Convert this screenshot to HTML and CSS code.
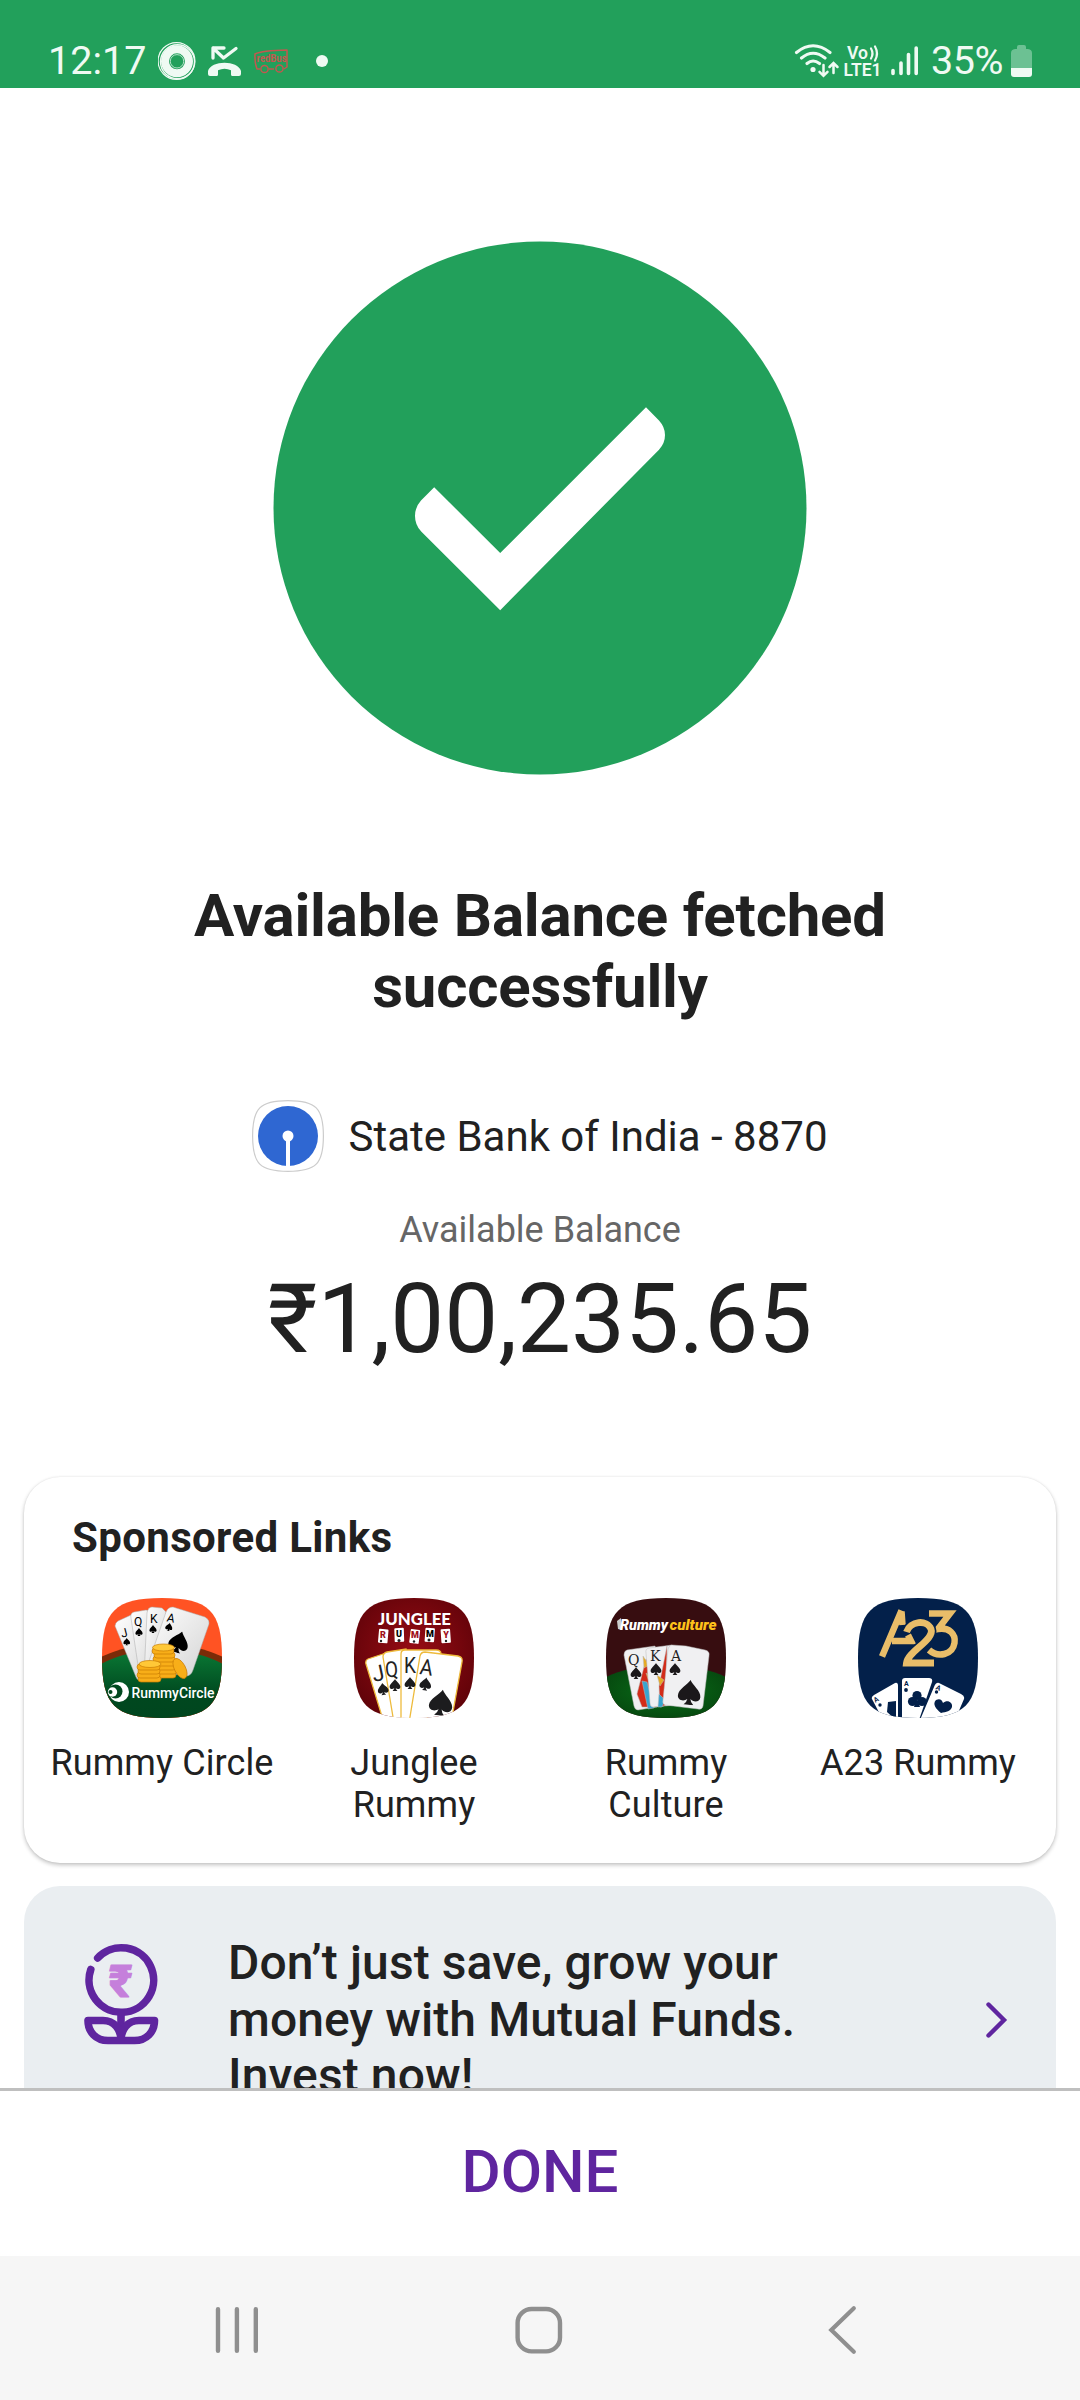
FILE: index.html
```html
<!DOCTYPE html>
<html lang="en">
<head>
<meta charset="utf-8">
<title>Available Balance</title>
<link rel="stylesheet" href="styles.css">
</head>
<body>
<svg class="defs" width="0" height="0" aria-hidden="true">
  <defs>
    <symbol id="spade" viewBox="0 0 20 20"><path d="M10 0C12 4 19 8 19 13C19 17 14 18 11.2 15.2Q11.5 18 14 20H6Q8.5 18 8.8 15.2C6 18 1 17 1 13C1 8 8 4 10 0Z"/></symbol>
    <clipPath id="squircle"><path d="M60 0C107 0 120 13 120 60C120 107 107 120 60 120C13 120 0 107 0 60C0 13 13 0 60 0Z"/></clipPath>
    <linearGradient id="felt" x1="0" y1="0" x2="0" y2="1"><stop offset="0" stop-color="#0a7a35"/><stop offset=".45" stop-color="#00481f"/><stop offset="1" stop-color="#00431e"/></linearGradient>
    <linearGradient id="paper" x1="0" y1="0" x2="1" y2="1"><stop offset="0" stop-color="#fff"/><stop offset="1" stop-color="#d4d4d4"/></linearGradient>
    <radialGradient id="ruby" cx=".5" cy=".45" r=".65"><stop offset="0" stop-color="#980c14"/><stop offset="1" stop-color="#5c0208"/></radialGradient>
    <radialGradient id="table" cx=".5" cy=".4" r=".6"><stop offset="0" stop-color="#087018"/><stop offset=".75" stop-color="#06480f"/><stop offset="1" stop-color="#021812"/></radialGradient>
  </defs>
</svg>

<header class="status">
  <span class="clock">12:17</span>
  <svg class="notif" width="174" height="40" viewBox="158 41 174 40">
    <g fill="none" stroke="#effaf3">
      <circle cx="177" cy="61.3" r="12" stroke-width="8"/>
      <circle cx="176.5" cy="61" r="18.4" stroke-width="1.2"/>
      <circle cx="177.5" cy="61.8" r="17" stroke-width="1.4"/>
      <circle cx="177" cy="61.3" r="6.7" stroke-width=".7"/>
      <path d="M213 58V48H224M213 48L223.500 58L236 48.500" stroke-width="3.300" stroke-linecap="round" stroke-linejoin="round"/>
    </g>
    <path fill="#effaf3" d="M208 74V71C211 60 238 60 241 71V74Q241 76 239 76H232.500Q231 76 231 74.500V70.300Q224.500 67 218 70.300V74.500Q218 76 216.500 76H210Q208 76 208 74Z"/>
    <g fill="none" stroke="#c4574f" stroke-width="1.5" stroke-linejoin="round">
      <path d="M260 69H257Q254.500 63 255 54Q262 50.500 287 50V67L284 69M269 69H274"/>
      <circle cx="264.500" cy="69" r="3.600"/><circle cx="279.500" cy="68.500" r="3.600"/>
    </g>
    <text x="256.500" y="62" class="bus" textLength="30" lengthAdjust="spacingAndGlyphs">redBus</text>
    <circle cx="322" cy="61" r="6" fill="#effaf3"/>
  </svg>
  <svg class="signals" width="126" height="40" viewBox="794 41 126 40">
    <g fill="none" stroke="#effaf3" stroke-width="3.100" stroke-linecap="round">
      <path d="M796.500 52.500Q813 39 830 52.500M801.500 58Q813 48.500 825 58M807 63.500Q813 58.500 819.500 63.500"/>
      <path d="M823.500 65V75.500M819.500 71.800L823.500 75.800L827.500 71.800M833.500 73V63.500M829.500 67L833.500 63L837.500 67" stroke-width="2.500"/>
      <path d="M871 48.500Q874 53.500 871 58.500M875 46.500Q879 53.500 875 60.500" stroke-width="2.200"/>
      <path d="M893 70.500V73.500M901 63V73.500M908.500 54.500V73.500M916.200 48V73.500" stroke-width="3.600"/>
    </g>
    <circle cx="813" cy="69.500" r="2.600" fill="#effaf3"/>
    <text class="net" x="847" y="59" textLength="21" lengthAdjust="spacingAndGlyphs">Vo</text>
    <text class="net" x="843.500" y="76" textLength="38" lengthAdjust="spacingAndGlyphs">LTE1</text>
  </svg>
  <span class="percent">35%</span>
  <svg class="battery" width="21" height="32" viewBox="0 0 21 32">
    <path fill="#6cc193" d="M6 2Q6 0 8 0H13Q15 0 15 2V4H17Q21 4.500 21 8V23H0V8Q0 4.500 4 4H6Z"/>
    <path fill="#effaf3" d="M0 23H21V29Q21 32 18 32H3Q0 32 0 29Z"/>
  </svg>
</header>

<main class="content">
  <svg class="success" width="534" height="534" viewBox="273 240.500 534 534">
    <circle cx="540" cy="507.500" r="266.500" fill="#22a05b"/>
    <path fill="#fff" d="M646 406.800L659 420Q665 426.500 665 434.600Q665 443 659 449.200L500.200 609.700L421.200 531Q415 524.500 415 515.500Q415 506.500 421 500L434.200 486.700L500.200 552.600Z"/>
  </svg>
  <h1 class="title">Available Balance fetched<br>successfully</h1>
  <div class="bank">
    <svg width="72" height="72" viewBox="0 0 72 72">
      <path d="M36 .6C64 .6 71.400 8 71.400 36C71.400 64 64 71.400 36 71.400C8 71.400 .6 64 .6 36C.6 8 8 .6 36 .6Z" fill="#fff" stroke="#ccc" stroke-width="1.200"/>
      <circle cx="36" cy="36" r="30" fill="#2f67d2"/>
      <circle cx="36" cy="36" r="5.500" fill="#fff"/><path d="M36 36V67" stroke="#fff" stroke-width="4"/>
    </svg>
    <span>State Bank of India - 8870</span>
  </div>
  <p class="caption">Available Balance</p>
  <p class="amount">₹1,00,235.65</p>

  <section class="sponsored">
    <h2>Sponsored Links</h2>
    <div class="links">
      <a class="link">
        <svg width="120" height="120" viewBox="0 0 120 120"><g clip-path="url(#squircle)">
          <rect width="120" height="120" fill="#ff5323"/>
          <ellipse cx="60" cy="93" rx="88" ry="47" fill="#7b2b08"/>
          <ellipse cx="60" cy="102" rx="88" ry="50" fill="url(#felt)"/>
          <g fill="url(#paper)" stroke="#aaa" stroke-width=".5">
            <path d="M16 23L29 17Q32 16 34 20L52 70L37 82Q35 82 34 79L13 28Q13 25 16 23Z"/>
            <path d="M32 14L44 12Q47 12 47 16L54 80L37 74L29 20Q28 15 32 14Z"/>
            <path d="M50 9L60 10L64 14L60 80H42L45 15Q46 9 50 9Z"/>
            <path d="M71 9L103 19Q108 22 107 26L91 72Q89 78 84 78L48 72Q45 70 46 66L64 14Q66 9 71 9Z"/>
          </g>
          <g class="pips"><text x="19" y="39" transform="rotate(-15 22 36)">J</text><text x="32" y="28">Q</text><text x="48" y="25">K</text><text x="65" y="24" transform="rotate(12 68 20)">A</text></g>
          <use href="#spade" x="21" y="40" width="7.500" height="7.500"/><use href="#spade" x="33" y="30" width="8" height="8"/><use href="#spade" x="47" y="27" width="8" height="8"/><use href="#spade" x="63" y="25" width="8" height="8" transform="rotate(12 67 29)"/><use href="#spade" x="66" y="33" width="22" height="22" transform="rotate(17 77 44)"/>
          <g fill="#f8ae18" stroke="#c97c05" stroke-width=".7">
            <rect x="51" y="74" width="23" height="6" rx="3"/><rect x="52" y="70" width="23" height="6" rx="3"/><rect x="51" y="66" width="23" height="6" rx="3"/><rect x="52" y="62" width="22" height="6" rx="3"/><rect x="51" y="58" width="22" height="6" rx="3"/><rect x="52" y="54" width="21" height="6" rx="3"/><rect x="50" y="50" width="22" height="6" rx="3"/><ellipse cx="61.500" cy="49.500" rx="11" ry="3.500" fill="#ffc837"/>
            <rect x="36" y="78" width="23" height="6" rx="3"/><rect x="35" y="74" width="23" height="6" rx="3"/><rect x="36" y="70" width="22" height="6" rx="3"/><rect x="35" y="66" width="23" height="6" rx="3"/><ellipse cx="48" cy="66" rx="11" ry="3.500" fill="#ffc837"/>
            <ellipse cx="78" cy="70.500" rx="5.500" ry="11" transform="rotate(-28 78 70.500)"/>
          </g>
          <circle cx="17" cy="94" r="10" fill="#fff"/><circle cx="13.500" cy="93.500" r="7" fill="#00481f"/><circle cx="10.500" cy="94" r="4.700" fill="#fff"/><circle cx="8.500" cy="94" r="2" fill="#00481f"/>
          <text x="29.500" y="99.500" class="logo-circle" textLength="83" lengthAdjust="spacingAndGlyphs">RummyCircle</text>
        </g></svg>
        <span>Rummy Circle</span>
      </a>
      <a class="link">
        <svg width="120" height="120" viewBox="0 0 120 120"><g clip-path="url(#squircle)">
          <rect width="120" height="120" fill="url(#ruby)"/>
          <text x="24" y="27" class="logo-junglee" textLength="73" lengthAdjust="spacingAndGlyphs">JUNGLEE</text>
          <g fill="#fff"><rect x="24.500" y="31" width="9.500" height="14" rx="1" transform="rotate(5 29 38)"/><rect x="40.500" y="30" width="9.500" height="14" rx="1" transform="rotate(-2 45 37)"/><rect x="56" y="31.500" width="9.500" height="14" rx="1" transform="rotate(7 61 38)"/><rect x="71" y="30" width="9.500" height="14" rx="1" transform="rotate(4 76 37)"/><rect x="87" y="31" width="9.500" height="14" rx="1" transform="rotate(-4 92 38)"/></g>
          <g class="tiles"><text x="29" y="39.500" fill="#a00f1a">R</text><text x="45" y="38.500">U</text><text x="61" y="40" fill="#a00f1a">M</text><text x="76" y="38.500">M</text><text x="92" y="40" fill="#a00f1a">Y</text></g>
          <g fill="#222"><circle cx="27" cy="43" r="1.200"/><circle cx="45" cy="42.500" r="1.500"/><circle cx="60" cy="43.500" r="1.200"/><circle cx="75" cy="42" r="1.500"/><circle cx="92" cy="43" r="1.200"/></g>
          <g fill="#fff" stroke="#eebb3c" stroke-width="1.300">
            <path d="M14 61L35 54L50 125H30L12 66Q11 62 14 61Z"/><path d="M33 54L52 51L60 125H40L29 59Q29 55 33 54Z"/><path d="M51 52H82Q87 52 87 56L72 125H47V56Q47 52 51 52Z"/><path d="M71 54L104 58Q109 59 108 64L97 125H55L66 58Q67 54 71 54Z"/>
          </g>
          <g class="faces"><text x="18" y="83" transform="rotate(-12 24 75)">J</text><text x="31" y="79" transform="rotate(-5 37 70)" textLength="13" lengthAdjust="spacingAndGlyphs">Q</text><text x="50" y="75" textLength="12" lengthAdjust="spacingAndGlyphs">K</text><text x="66" y="77" transform="rotate(8 73 70)" textLength="13" lengthAdjust="spacingAndGlyphs">A</text></g>
          <g fill="#1c1c1e"><use href="#spade" x="23" y="84" width="12" height="14" transform="rotate(-8 29 91)"/><use href="#spade" x="35" y="80" width="12" height="14"/><use href="#spade" x="50" y="78" width="12" height="14"/><use href="#spade" x="65" y="79" width="13" height="14" transform="rotate(8 72 86)"/><use href="#spade" x="74" y="91" width="26" height="27" transform="rotate(8 87 105)"/></g>
        </g></svg>
        <span>Junglee<br>Rummy</span>
      </a>
      <a class="link">
        <svg width="120" height="120" viewBox="0 0 120 120"><g clip-path="url(#squircle)">
          <rect width="120" height="120" fill="#370d10"/>
          <ellipse cx="60" cy="99" rx="76" ry="32" fill="url(#table)"/>
          <path d="M11 23L15 20L16 32L12 31Z" fill="#ccc"/>
          <text x="14" y="32" class="logo-culture" textLength="48" lengthAdjust="spacingAndGlyphs">Rummy</text>
          <text x="63.500" y="32" class="logo-culture gold" textLength="47" lengthAdjust="spacingAndGlyphs">culture</text>
          <g fill="#f0f0f2" stroke="#bbb" stroke-width=".5">
            <path d="M21 52L49 48L62 107L32 112Q29 112 28 108L18 57Q18 53 21 52Z"/>
            <path d="M40 61L47 72L51 109H36L31 96Z" fill="#d22b18"/><path d="M36 83L41 84L48 110L42 111Z" fill="#39a5cf"/><path d="M37 58L43 67L38 70ZM40 75L47 80L44 87Z" fill="#e7aa22"/>
            <path d="M43 50L66 47L70 107L47 109Q44 109 44 105L40 55Q39 51 43 50Z"/>
            <path d="M61 48L53 88L54 109L60 107Z" fill="#d22b18"/><path d="M51 77L58 82L54 88Z" fill="#e7aa22"/><path d="M53 96L59 102L56 109H52Z" fill="#39a5cf"/>
            <path d="M66 47L80 48L99 52Q104 53 103 58L97 108Q96 112 92 111L59 107Q56 106 57 102L62 51Q63 47 66 47Z"/>
          </g>
          <g class="slab"><text x="22" y="67">Q</text><text x="44" y="63">K</text><text x="65" y="63">A</text></g>
          <g fill="#1b181a"><use href="#spade" x="24" y="69" width="12" height="12"/><use href="#spade" x="44" y="65" width="12" height="12"/><use href="#spade" x="63" y="65" width="12" height="12"/><use href="#spade" x="70" y="82" width="27" height="25" transform="rotate(5 84 94)"/></g>
        </g></svg>
        <span>Rummy<br>Culture</span>
      </a>
      <a class="link">
        <svg width="120" height="120" viewBox="0 0 120 120"><g clip-path="url(#squircle)">
          <rect width="120" height="120" fill="#03204a"/>
          <g fill="none" stroke="#e9bd69" stroke-width="6.500">
            <path d="M43.500 12.500L24 58.500M43.500 13.500L44.500 27" stroke-linejoin="bevel"/>
            <path d="M34 43H53L50 37"/>
            <path d="M71 15.500H92L80 31C91 29 98 36 96.500 45C94.500 57 80 60 71 52"/>
          </g>
          <g fill="none" stroke-width="6.800">
            <path d="M49 34C52 23 69 21 73 31C77 42 50 53 48.500 65H76" stroke="#03204a" stroke-width="10"/>
            <path d="M48.500 34C52 23 69 21 73 31C77 42 50 53 48.500 65H76" stroke="#e9bd69"/>
          </g>
          <g fill="#fff">
            <path d="M16 97L37 85Q40 84 40 88V122H25L14 101Q13 99 16 97Z"/>
            <path d="M47 80H71Q75 80 74 84L61 122H44V83Q44 80 47 80Z"/>
            <path d="M81 85L103 96Q107 98 106 101L97 122H62L76 89Q78 84 81 85Z"/>
          </g>
          <g fill="#03204a">
            <path d="M30 104L38 103V122L29 114Z"/><circle cx="22" cy="107" r="1.700"/>
            <circle cx="59" cy="97.500" r="4.600"/><circle cx="54.500" cy="103.500" r="4.600"/><circle cx="64" cy="103.500" r="4.600"/><path d="M59 100L62 109H56Z"/><circle cx="48" cy="92" r="1.900"/>
            <path d="M78 102C82 100 84 102 85 105C89 101 95 104 94 109C93 113 88 114 83 115C78 111 74 106 78 102Z"/><circle cx="78.500" cy="94" r="1.700"/>
          </g>
          <g class="mini"><text x="16" y="104" transform="rotate(-30 18 102)">A</text><text x="46" y="88">A</text><text x="78" y="92" transform="rotate(25 80 90)">A</text></g>
        </g></svg>
        <span>A23 Rummy</span>
      </a>
    </div>
  </section>

  <section class="promo">
    <svg class="flower" width="76" height="104" viewBox="83 1943 76 104">
      <g fill="none" stroke="#5f259f" stroke-width="7.600" stroke-linecap="round" stroke-linejoin="round">
        <path d="M97.700 1958A32.300 32.300 0 1 1 90.800 1969.500"/>
        <path d="M121 2013V2038" stroke-linecap="butt"/>
        <path d="M88 2020.500H103C114 2020.500 121 2029 121 2040.500H108C96 2040.500 88 2032 88 2020.500ZM154.500 2020.500H139C128 2020.500 121 2029 121 2040.500H134.500C146.500 2040.500 154.500 2032 154.500 2020.500Z"/>
      </g>
      <text x="120.700" y="1996.500" class="rupee" text-anchor="middle">₹</text>
    </svg>
    <p>Don’t just save, grow your<br>money with Mutual Funds.<br>Invest now!</p>
    <svg class="chevron" width="24" height="40" viewBox="984 2000 24 40"><path d="M988.500 2004.500L1004 2020L988.500 2035.500" fill="none" stroke="#5f259f" stroke-width="4.400" stroke-linecap="round"/></svg>
  </section>
</main>

<button class="done">DONE</button>

<nav class="navbar">
  <svg width="48" height="52" viewBox="0 0 48 52"><path d="M5 5.300V46.700M23.900 5.300V46.700M42.800 5.300V46.700" stroke="#8f8f8f" stroke-width="4.400" stroke-linecap="round"/></svg>
  <svg width="48" height="52" viewBox="0 0 48 52"><rect x="2.600" y="5" width="42.400" height="42.400" rx="14" fill="none" stroke="#8f8f8f" stroke-width="4.400"/></svg>
  <svg width="48" height="52" viewBox="0 0 48 52"><path d="M37.800 4.300L15.300 26L37.800 47.700" fill="none" stroke="#8f8f8f" stroke-width="4.200" stroke-linecap="round"/></svg>
</nav>
</body>
</html>
```
FILE: styles.css
```css
* { box-sizing: border-box; }

body {
  margin: 0;
  width: 1080px;
  height: 2400px;
  display: flex;
  flex-direction: column;
  overflow: hidden;
  background: #fff;
  color: #212121;
  font-family: Roboto, "Liberation Sans", sans-serif;
}

h1, h2, p { margin: 0; }
svg { display: block; flex: none; }
.defs { height: 0; }

.status {
  flex: none;
  height: 88px;
  padding: 34px 48px 0;
  display: flex;
  align-items: center;
  background: #22a05b;
  color: #effaf3;
  font-size: 39.5px;
  line-height: 54px;
}
.clock { width: 110px; }
.notif { margin-right: 462px; }
.percent { width: 80px; margin-left: 11px; letter-spacing: -0.4px; }
.bus { font-size: 10px; font-weight: 700; fill: #c4574f; }
.net { font-size: 17.5px; font-weight: 600; fill: #effaf3; }

.content {
  flex: none;
  height: 2000px;
  overflow: hidden;
  display: flex;
  flex-direction: column;
  align-items: center;
}
.success { margin-top: 153px; }
.title {
  margin-top: 106px;
  font-size: 60px;
  font-weight: 700;
  line-height: 70.5px;
  letter-spacing: -0.2px;
  text-align: center;
}
.bank {
  margin-top: 78px;
  display: flex;
  align-items: center;
  gap: 24px;
  font-size: 42px;
}
.caption { margin-top: 36.5px; font-size: 36px; line-height: 42px; color: #666; }
.amount { margin-top: 12.5px; font-size: 96px; line-height: 112px; }

.sponsored {
  flex: none;
  width: 1032px;
  height: 386px;
  margin-top: 102px;
  padding: 36px 12px 0;
  border-radius: 36px;
  background: #fff;
  box-shadow: 0 2px 4px rgba(0, 0, 0, .24), 0 0 2px rgba(0, 0, 0, .08);
}
.sponsored h2 { padding-left: 36px; font-size: 42px; line-height: 50px; letter-spacing: .35px; }
.links { margin-top: 35px; display: grid; grid-template-columns: repeat(4, 252px); }
.link { display: flex; flex-direction: column; align-items: center; gap: 24px; text-align: center; font-size: 36px; line-height: 42px; letter-spacing: .1px; }
.link svg { letter-spacing: 0; }

.pips text { font-size: 12px; }
.logo-circle { font-size: 15px; font-weight: 500; fill: #fff; }
.logo-junglee { font: 900 17px Lato, sans-serif; fill: #fff; }
.tiles text { font-size: 9px; font-weight: 900; text-anchor: middle; }
.faces text { font-size: 22px; fill: #222; }
.logo-culture { font-size: 15.5px; font-weight: 900; font-style: italic; fill: #fff; }
.gold { fill: #ffc21a; }
.slab text { font: 14px "DejaVu Serif", serif; fill: #222; }
.mini text { font-size: 7px; font-weight: 700; fill: #03204a; }

.promo {
  flex: none;
  width: 1032px;
  height: 268px;
  margin-top: 23px;
  padding: 0 48px 0 59px;
  display: flex;
  align-items: center;
  border-radius: 36px;
  background: #eaeef1;
}
.promo p { flex: 1; margin-left: 69px; font-size: 48px; font-weight: 500; line-height: 56.7px; letter-spacing: .1px; }
.flower { align-self: flex-start; margin-top: 57px; }
.rupee { font-size: 45px; font-weight: 900; fill: #c57fdb; stroke: #c57fdb; stroke-width: 1px; stroke-linejoin: round; }

.done {
  flex: none;
  height: 168px;
  padding: 0 0 4px;
  border: 0;
  border-top: 3px solid #bfbfbf;
  background: #fff;
  color: #5f259f;
  font: 500 60px/70px Roboto, "Liberation Sans", sans-serif;
}

.navbar {
  flex: 1;
  display: flex;
  justify-content: space-between;
  align-items: center;
  padding: 4px 216px 0 213px;
  background: #f6f6f6;
}
```
